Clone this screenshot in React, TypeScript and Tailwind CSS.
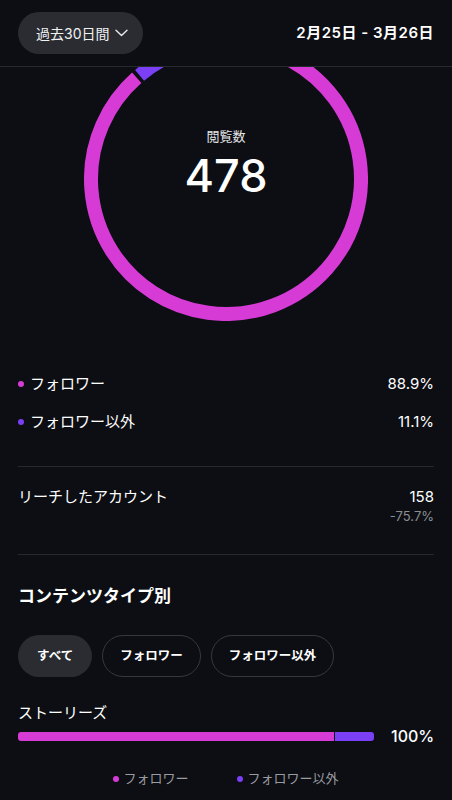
import React from 'react';

const PINK = '#d63bd6';
const PURPLE = '#7b3ff5';

// 角度(上から時計回り, 度)で円弧のパスを作る
function arcPath(cx: number, cy: number, r: number, start: number, end: number) {
  const toXY = (deg: number) => {
    const rad = ((deg - 90) * Math.PI) / 180;
    return [cx + r * Math.cos(rad), cy + r * Math.sin(rad)];
  };
  const [x1, y1] = toXY(start);
  const [x2, y2] = toXY(end);
  const large = end - start > 180 ? 1 : 0;
  return `M ${x1} ${y1} A ${r} ${r} 0 ${large} 1 ${x2} ${y2}`;
}

function Donut() {
  return (
    <div className="relative mx-auto mt-[-30px] h-[284px] w-[284px]">
      <svg width="284" height="284" viewBox="0 0 284 284">
        <path d={arcPath(142, 142, 135, 0.8, 318.6)} stroke={PINK} strokeWidth="14" fill="none" />
        <path d={arcPath(142, 142, 135, 320.2, 359.2)} stroke={PURPLE} strokeWidth="14" fill="none" />
      </svg>
      <div className="absolute inset-0 flex flex-col items-center justify-center pb-[29px]">
        <span className="text-[13px] leading-[18px] text-[#e4e5e7]">閲覧数</span>
        <span className="mt-[5px] text-[45px] font-medium leading-[52px] text-white">478</span>
      </div>
    </div>
  );
}

function Dot({ color }: { color: string }) {
  return <span className="inline-block h-[6px] w-[6px] rounded-full" style={{ backgroundColor: color }} />;
}

export default function App() {
  return (
    <div
      className="h-[800px] w-full overflow-hidden bg-[#0c0e13] text-white"
      style={{ fontFamily: 'Inter, "Noto Sans CJK JP", sans-serif' }}
    >
      {/* ヘッダー */}
      <div className="relative z-10 flex h-[67px] items-center justify-between border-b border-[#26292e] bg-[#0c0e13] px-[18px]">
        <button className="flex h-[42px] items-center gap-[6px] rounded-full bg-[#2a2c32] pl-[18px] pr-[15px] text-[14px] text-[#f1f1f2]">
          <span>過去30日間</span>
          <svg width="13" height="8" viewBox="0 0 13 8" fill="none">
            <path d="M1 1.2 L6.5 6.6 L12 1.2" stroke="#e8e8ea" strokeWidth="1.4" strokeLinecap="round" strokeLinejoin="round" />
          </svg>
        </button>
        <span className="text-[15px] font-semibold tracking-[0.5px]">2月25日 - 3月26日</span>
      </div>

      <div className="overflow-hidden">
        <Donut />

        <div className="mt-[44px] px-[18px]">
          <div className="flex h-[38px] items-center justify-between text-[15px]">
            <div className="flex items-center gap-[6px]">
              <Dot color={PINK} />
              <span>フォロワー</span>
            </div>
            <span>88.9%</span>
          </div>
          <div className="flex h-[38px] items-center justify-between text-[15px]">
            <div className="flex items-center gap-[6px]">
              <Dot color={PURPLE} />
              <span>フォロワー以外</span>
            </div>
            <span>11.1%</span>
          </div>

          <div className="mt-[25px] border-t border-[#26292e]" />

          <div className="flex justify-between pb-[29px] pt-[20px]">
            <span className="text-[15px] leading-[20px]">リーチしたアカウント</span>
            <div className="flex flex-col items-end">
              <span className="text-[15px] leading-[20px]">158</span>
              <span className="text-[13px] leading-[18px] text-[#8b8d92]">-75.7%</span>
            </div>
          </div>

          <div className="border-t border-[#26292e]" />

          <h2 className="mt-[29px] text-[17px] font-bold leading-[24px]">コンテンツタイプ別</h2>

          <div className="mt-[27px] flex gap-[10px]">
            <button className="h-[42px] rounded-full bg-[#2a2c32] px-[19px] text-[12.5px] font-bold">すべて</button>
            <button className="h-[42px] rounded-full border border-[#36383e] px-[17px] text-[12.5px] font-bold">フォロワー</button>
            <button className="h-[42px] rounded-full border border-[#36383e] px-[17px] text-[12.5px] font-bold">フォロワー以外</button>
          </div>

          <div className="mt-[26px] text-[15px] leading-[20px]">ストーリーズ</div>

          <div className="mt-[3px] flex h-[20px] items-center gap-[17px]">
            <div className="flex h-[9px] flex-1 gap-[1px]">
              <div className="h-full w-[88.9%] rounded-l-[3px]" style={{ backgroundColor: PINK }} />
              <div className="h-full flex-1 rounded-r-[3px]" style={{ backgroundColor: PURPLE }} />
            </div>
            <span className="w-[43px] shrink-0 text-right text-[16px] font-medium">100%</span>
          </div>

          <div className="mt-[23px] flex h-[20px] items-center justify-center gap-[48px] text-[13px] text-[#9a9ca1]">
            <div className="flex items-center gap-[4px]">
              <Dot color={PINK} />
              <span>フォロワー</span>
            </div>
            <div className="flex items-center gap-[5px]">
              <Dot color={PURPLE} />
              <span>フォロワー以外</span>
            </div>
          </div>
        </div>
      </div>
    </div>
  );
}
